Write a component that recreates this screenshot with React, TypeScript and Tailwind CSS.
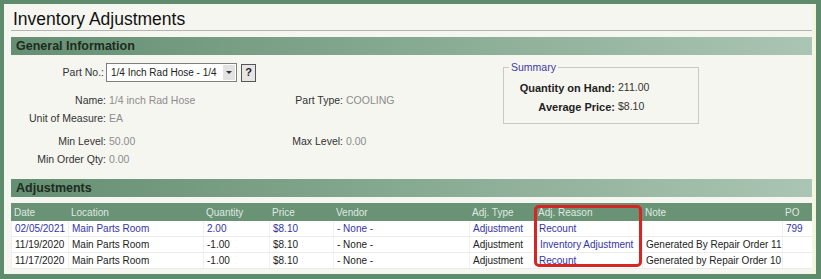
import React from "react";

const cols = [
  { w: "w-[57px]", label: "Date" },
  { w: "w-[135px]", label: "Location" },
  { w: "w-[66px]", label: "Quantity" },
  { w: "w-[64px]", label: "Price" },
  { w: "w-[136px]", label: "Vendor" },
  { w: "w-[66px]", label: "Adj. Type" },
  { w: "w-[107px]", label: "Adj. Reason" },
  { w: "w-[140px]", label: "Note" },
  { w: "w-[30px]", label: "PO" },
];

type Cell = { t: string; blue?: boolean; extra?: string };
const rows: Cell[][] = [
  [
    { t: "02/05/2021", blue: true },
    { t: "Main Parts Room", blue: true },
    { t: "2.00", blue: true },
    { t: "$8.10", blue: true },
    { t: "- None -", blue: true },
    { t: "Adjustment", blue: true },
    { t: "Recount", blue: true },
    { t: "" },
    { t: "799", blue: true },
  ],
  [
    { t: "11/19/2020" },
    { t: "Main Parts Room" },
    { t: "-1.00" },
    { t: "$8.10" },
    { t: "- None -" },
    { t: "Adjustment" },
    { t: "Inventory Adjustment", blue: true, extra: "pl-[4px]" },
    { t: "Generated By Repair Order 11" },
    { t: "" },
  ],
  [
    { t: "11/17/2020" },
    { t: "Main Parts Room" },
    { t: "-1.00" },
    { t: "$8.10" },
    { t: "- None -" },
    { t: "Adjustment" },
    { t: "Recount", blue: true },
    { t: "Generated by Repair Order 10" },
    { t: "" },
  ],
];

function Field({ label, value }: { label: string; value: string }) {
  return (
    <div className="flex h-[18px] items-center">
      <div className="w-[95px] text-right text-[#333]">{label}</div>
      <div className="pl-[3px] text-[#8c8c8c]">{value}</div>
    </div>
  );
}

export default function App() {
  return (
    <div
      className="w-[821px] h-[279px] bg-[#5f8b6d] pt-[4px] pl-[4px] pr-[5px] pb-[5px]"
      style={{ fontFamily: '"Liberation Sans", Arial, sans-serif' }}
    >
      <div className="h-full bg-[#f6f6f1] pl-[7px] pr-[1px] border-r-[3px] border-[#f4f6dc] flex flex-col">
        {/* Title */}
        <div className="h-[27px] shrink-0 border-b border-[#b4b4b0] pl-[2px] pt-[5px] text-[17.5px] leading-[20px] text-[#111]">
          Inventory Adjustments
        </div>
        {/* General Information bar */}
        <div className="mt-[6px] h-[18px] shrink-0 bg-gradient-to-r from-[#658f72] to-[#aac5b3] pl-[5px] pt-[1px] text-[12.5px] font-bold leading-[17px] text-[#1d2b21]">
          General Information
        </div>
        {/* General info body */}
        <div className="flex h-[124px] shrink-0 text-[10.5px]">
          <div className="w-[492px]">
            <div className="mt-[8px] flex h-[19px] items-center">
              <div className="w-[93px] text-right text-[#333]">Part No.:</div>
              <div className="ml-[2px] flex h-[19px] w-[131px] items-center overflow-hidden border border-[#7f7f7f] bg-white">
                <div className="flex-1 whitespace-nowrap pl-[4px] text-[10px] text-[#222]">1/4 Inch Rad Hose - 1/4</div>
                <div className="mr-[1px] flex h-[15px] w-[12px] shrink-0 items-center justify-center bg-[#e2e2e2]">
                  <div className="h-0 w-0 border-l-[3px] border-r-[3px] border-t-[3px] border-l-transparent border-r-transparent border-t-[#333]" />
                </div>
              </div>
              <div className="ml-[4px] flex h-[18px] w-[15px] items-center justify-center border border-[#555] bg-[#e6e6e6] text-[11px] font-bold text-[#222]">
                ?
              </div>
            </div>
            <div className="mt-[10px] flex">
              <div className="w-[241px]">
                <Field label="Name:" value="1/4 inch Rad Hose" />
                <Field label="Unit of Measure:" value="EA" />
              </div>
              <div className="flex h-[18px] items-center">
                <div className="w-[91px] text-right text-[#333]">Part Type:</div>
                <div className="pl-[3px] text-[#8c8c8c]">COOLING</div>
              </div>
            </div>
            <div className="mt-[5px] flex">
              <div className="w-[241px]">
                <Field label="Min Level:" value="50.00" />
                <Field label="Min Order Qty:" value="0.00" />
              </div>
              <div className="flex h-[18px] items-center">
                <div className="w-[91px] text-right text-[#333]">Max Level:</div>
                <div className="pl-[3px] text-[#8c8c8c]">0.00</div>
              </div>
            </div>
          </div>
          {/* Summary */}
          <div className="relative mt-[12px] h-[57px] w-[196px] border border-[#c9c9c1]">
            <span className="absolute -top-[7px] left-[5px] bg-[#f6f6f1] px-[2px] text-[10.5px] leading-[12px] text-[#3a3aa6]">
              Summary
            </span>
            <div className="mt-[12px] flex h-[16px] items-center">
              <div className="w-[111px] text-right text-[11px] font-bold text-[#222]">Quantity on Hand:</div>
              <div className="pl-[3px] text-[#333]">211.00</div>
            </div>
            <div className="mt-[3px] flex h-[16px] items-center">
              <div className="w-[111px] text-right text-[11px] font-bold text-[#222]">Average Price:</div>
              <div className="pl-[3px] text-[#333]">$8.10</div>
            </div>
          </div>
        </div>
        {/* Adjustments bar */}
        <div className="h-[18px] shrink-0 bg-gradient-to-r from-[#658f72] to-[#aac5b3] pl-[5px] pt-[1px] text-[12.5px] font-bold leading-[17px] text-[#1d2b21]">
          Adjustments
        </div>
        {/* Table */}
        <div className="relative mt-[6px] shrink-0 text-[10px]">
          <div className="flex h-[18px] items-center bg-[#6a9375] text-[#dde9e0]">
            {cols.map((c) => (
              <div key={c.label} className={`${c.w} pl-[3px]`}>
                {c.label}
              </div>
            ))}
          </div>
          {rows.map((r, i) => (
            <div key={i} className="flex h-[16px] items-stretch border-b border-[#ebebeb] bg-white">
              {r.map((c, j) => (
                <div
                  key={j}
                  className={`${cols[j].w} ${c.extra ?? "pl-[3px]"} flex items-center whitespace-nowrap border-l border-[#f0f0f0] ${
                    c.blue ? "text-[#3434a8]" : "text-[#222]"
                  }`}
                >
                  {c.t}
                </div>
              ))}
            </div>
          ))}
          <div className="absolute left-[523px] top-[2px] h-[62px] w-[108px] rounded-[5px] border-[3px] border-[#d52525]" />
        </div>
      </div>
    </div>
  );
}
